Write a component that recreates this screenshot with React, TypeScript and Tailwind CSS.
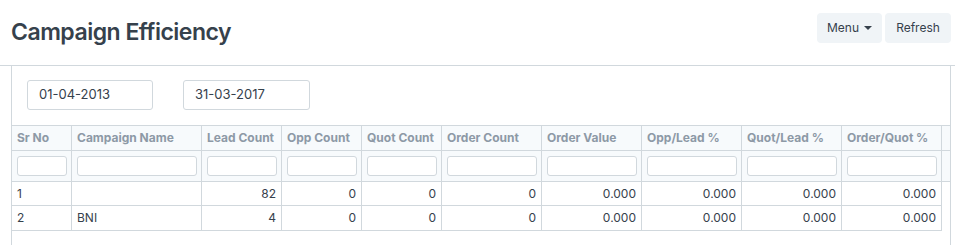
import React from "react"

const columns = [
  { label: "Sr No", w: "w-[60px]", align: "left" },
  { label: "Campaign Name", w: "w-[130px]", align: "left" },
  { label: "Lead Count", w: "w-[80px]", align: "right" },
  { label: "Opp Count", w: "w-[80px]", align: "right" },
  { label: "Quot Count", w: "w-[80px]", align: "right" },
  { label: "Order Count", w: "w-[100px]", align: "right" },
  { label: "Order Value", w: "w-[100px]", align: "right" },
  { label: "Opp/Lead %", w: "w-[100px]", align: "right" },
  { label: "Quot/Lead %", w: "w-[100px]", align: "right" },
  { label: "Order/Quot %", w: "w-[100px]", align: "right" },
]

const rows = [
  ["1", "", "82", "0", "0", "0", "0.000", "0.000", "0.000", "0.000"],
  ["2", "BNI", "4", "0", "0", "0", "0.000", "0.000", "0.000", "0.000"],
]

export default function App() {
  return (
    <div className="w-[955px] h-[245px] bg-white overflow-hidden font-['Inter','Liberation_Sans',sans-serif] text-[#36414c]">
      {/* Page head */}
      <div className="h-[66px] border-b border-[#d1d8dd] flex items-start justify-between pl-[11px] pr-[4px]">
        <h1 className="mt-[17px] text-[23px] leading-[30px] font-semibold tracking-[-0.5px] text-[#36414c]">
          Campaign Efficiency
        </h1>
        <div className="mt-[13px] flex gap-[3px]">
          <button className="h-[30px] w-[65px] rounded-[4px] bg-[#f0f4f7] text-[12px] flex items-center justify-center gap-[5px]">
            Menu
            <span className="w-0 h-0 border-l-[4px] border-r-[4px] border-t-[4px] border-l-transparent border-r-transparent border-t-[#36414c]" />
          </button>
          <button className="h-[30px] w-[66px] rounded-[4px] bg-[#f0f4f7] text-[12px]">Refresh</button>
        </div>
      </div>

      {/* Page body */}
      <div className="ml-[11px] mr-[4px] h-[179px] border-l border-r border-[#d1d8dd]">
        <div className="pt-[14px] pl-[15px] flex gap-[30px]">
          <div className="w-[126px] h-[30px] border border-[#d1d8dd] rounded-[3px] flex items-center pl-[11px] text-[13px]">
            01-04-2013
          </div>
          <div className="w-[127px] h-[30px] border border-[#d1d8dd] rounded-[3px] flex items-center pl-[11px] text-[13px]">
            31-03-2017
          </div>
        </div>

        <div className="mt-[15px] text-[12px]">
          {/* Header */}
          <div className="flex h-[26px] border-t border-b border-[#d1d8dd] bg-[#f7fafc]">
            {columns.map((c) => (
              <div
                key={c.label}
                className={`${c.w} shrink-0 border-r border-[#d1d8dd] pl-[5px] flex items-center font-bold text-[#8d99a6] whitespace-nowrap`}
              >
                {c.label}
              </div>
            ))}
            <div className="flex-1" />
          </div>
          {/* Filters */}
          <div className="flex h-[31px] border-b border-[#d1d8dd] bg-[#f7fafc]">
            {columns.map((c) => (
              <div key={c.label} className={`${c.w} shrink-0 border-r border-[#d1d8dd] pl-[5px] pr-[4px] flex items-center`}>
                <div className="w-full h-[20px] bg-white border border-[#d1d8dd] rounded-[3px]" />
              </div>
            ))}
            <div className="flex-1" />
          </div>
          {/* Data */}
          {rows.map((r, i) => (
            <div key={i} className={`flex w-[930px] border-b border-[#d1d8dd] ${i === 0 ? "h-[24px]" : "h-[25px]"}`}>
              {r.map((v, j) => (
                <div
                  key={j}
                  className={`${columns[j].w} shrink-0 border-r border-[#d1d8dd] px-[5px] flex items-center ${
                    columns[j].align === "right" ? "justify-end" : "justify-start"
                  }`}
                >
                  {v}
                </div>
              ))}
            </div>
          ))}
        </div>
      </div>
    </div>
  )
}
